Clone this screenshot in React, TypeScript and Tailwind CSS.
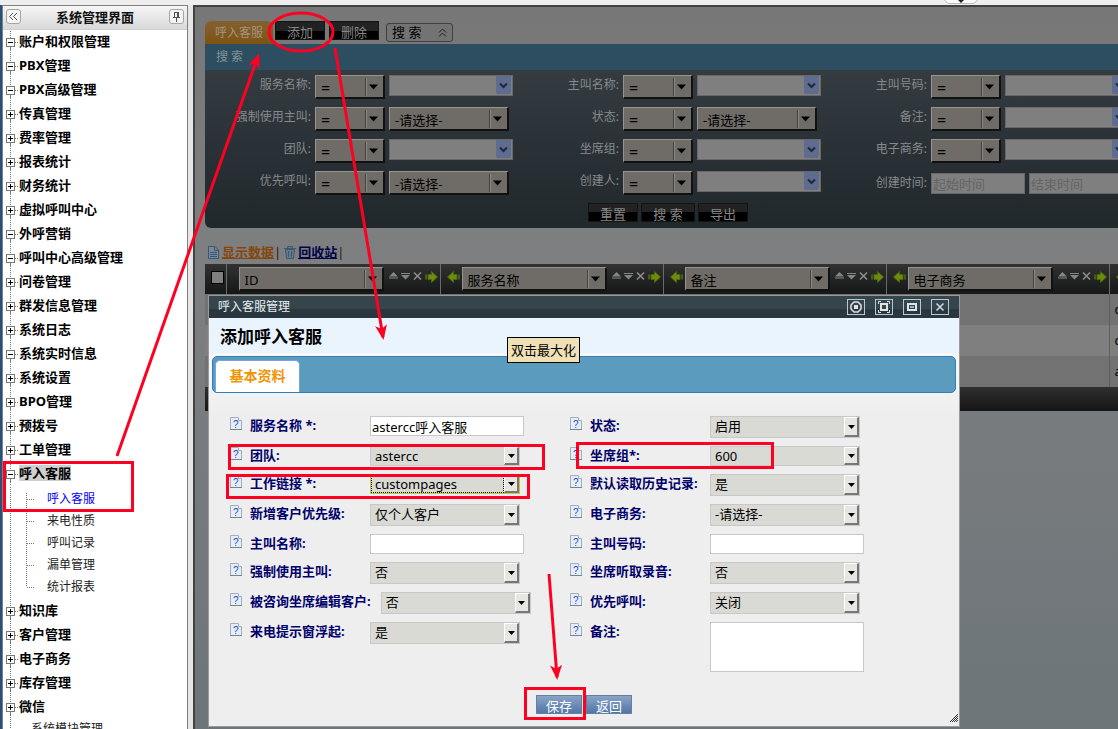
import { useState } from "react";
import type { ReactNode } from "react";
import clsx from "clsx";

interface TreeItem {
  label: string;
  open?: boolean;
  active?: boolean;
  children?: string[];
}

const TREE: TreeItem[] = [
  { label: "账户和权限管理", open: true },
  { label: "PBX管理", open: true },
  { label: "PBX高级管理", open: true },
  { label: "传真管理" },
  { label: "费率管理" },
  { label: "报表统计" },
  { label: "财务统计" },
  { label: "虚拟呼叫中心" },
  { label: "外呼营销", open: true },
  { label: "呼叫中心高级管理", open: true },
  { label: "问卷管理" },
  { label: "群发信息管理" },
  { label: "系统日志" },
  { label: "系统实时信息", open: true },
  { label: "系统设置" },
  { label: "BPO管理" },
  { label: "预拨号" },
  { label: "工单管理" },
  {
    label: "呼入客服",
    open: true,
    active: true,
    children: ["呼入客服", "来电性质", "呼叫记录", "漏单管理", "统计报表"],
  },
  { label: "知识库" },
  { label: "客户管理" },
  { label: "电子商务" },
  { label: "库存管理" },
  { label: "微信" },
];

interface SearchItem {
  id: string;
  label: string;
  kind: "combo" | "select" | "range";
}

const SEARCH_FIELDS: SearchItem[] = [
  { id: "s-name", label: "服务名称:", kind: "combo" },
  { id: "s-caller-name", label: "主叫名称:", kind: "combo" },
  { id: "s-caller-no", label: "主叫号码:", kind: "combo" },
  { id: "s-force", label: "强制使用主叫:", kind: "select" },
  { id: "s-status", label: "状态:", kind: "select" },
  { id: "s-note", label: "备注:", kind: "combo" },
  { id: "s-team", label: "团队:", kind: "combo" },
  { id: "s-group", label: "坐席组:", kind: "combo" },
  { id: "s-shop", label: "电子商务:", kind: "combo" },
  { id: "s-priority", label: "优先呼叫:", kind: "select" },
  { id: "s-creator", label: "创建人:", kind: "combo" },
  { id: "s-created", label: "创建时间:", kind: "range" },
];

interface FormItem {
  id: string;
  label: string;
  kind: "text" | "select" | "textarea";
  value: string;
  short?: boolean;
  focused?: boolean;
}

const FORM_FIELDS: FormItem[] = [
  { id: "f-name", label: "服务名称 *:", kind: "text", value: "astercc呼入客服" },
  { id: "f-status", label: "状态:", kind: "select", value: "启用" },
  { id: "f-team", label: "团队:", kind: "select", value: "astercc", short: true },
  { id: "f-group", label: "坐席组*:", kind: "select", value: "600", short: true },
  { id: "f-link", label: "工作链接 *:", kind: "select", value: "custompages", short: true, focused: true },
  { id: "f-history", label: "默认读取历史记录:", kind: "select", value: "是" },
  { id: "f-new", label: "新增客户优先级:", kind: "select", value: "仅个人客户" },
  { id: "f-shop", label: "电子商务:", kind: "select", value: "-请选择-" },
  { id: "f-caller-name", label: "主叫名称:", kind: "text", value: "" },
  { id: "f-caller-no", label: "主叫号码:", kind: "text", value: "" },
  { id: "f-force", label: "强制使用主叫:", kind: "select", value: "否" },
  { id: "f-record", label: "坐席听取录音:", kind: "select", value: "否" },
  { id: "f-edit", label: "被咨询坐席编辑客户:", kind: "select", value: "否" },
  { id: "f-priority", label: "优先呼叫:", kind: "select", value: "关闭" },
  { id: "f-popup", label: "来电提示窗浮起:", kind: "select", value: "是" },
  { id: "f-note", label: "备注:", kind: "textarea", value: "" },
];

const TABLE_COLUMNS = ["ID", "服务名称", "备注", "电子商务", "工作链接"];

/* ---------- sidebar ---------- */

function TreeRow({ item, first }: { item: TreeItem; first: boolean }) {
  return (
    <li>
      <button type="button" className="flex h-6 w-full items-start text-left">
        <svg width="16" height="24" className="shrink-0" stroke="#777" fill="none">
          <path d={first ? "M7.5 1V8" : "M7.5 0V8"} strokeDasharray="1 1" />
          <path d="M7.5 17V20" />
          <path d="M7.5 20V24" strokeDasharray="1 1" />
          <rect x="3.5" y="8.5" width="8" height="8" fill="#fff" />
          <path d="M5 12.5H10" stroke="#000" />
          {!item.open && <path d="M7.5 10V15" stroke="#000" />}
          <path d="M12 12.5H16" strokeDasharray="1 1" />
        </svg>
        <span
          className={clsx(
            "mt-[3px] text-[13px] leading-4 font-bold whitespace-nowrap text-black",
            item.active && "bg-[#cfcfcf]"
          )}
        >
          {item.label}
        </span>
      </button>
      {item.children && (
        <ul className="pt-0.5 pb-px">
          {item.children.map((child, i) => (
            <li key={child} className="flex h-[22px] items-center">
              <svg width="44" height="24" className="shrink-0" stroke="#777" fill="none">
                <path d="M7.5 0V24" strokeDasharray="1 1" />
                <path
                  d={i === 0 ? "M23.5 6V24" : i === item.children!.length - 1 ? "M23.5 0V12" : "M23.5 0V24"}
                  strokeDasharray="1 1"
                />
                <path d="M24 12.5H32" strokeDasharray="1 1" />
              </svg>
              <a href="#" className={clsx("text-xs leading-4", i === 0 ? "text-[#0000ff]" : "text-[#222]")}>
                {child}
              </a>
            </li>
          ))}
        </ul>
      )}
    </li>
  );
}

function HeaderButton({ title, children }: { title: string; children: ReactNode }) {
  return (
    <button
      type="button"
      title={title}
      className="flex size-[15px] items-center justify-center rounded-[3px] border border-[#a5a5a5] bg-[#f4f4f4]"
    >
      {children}
    </button>
  );
}

function Sidebar() {
  return (
    <aside className="flex w-[186px] shrink-0 flex-col border border-b-0 border-[#808080] bg-white">
      <div className="flex h-6 shrink-0 items-center justify-between border-b border-[#d0d0d0] bg-gradient-to-b from-[#f6f6f6] to-[#d9d9d9] px-[3px] pb-0.5">
        <HeaderButton title="收起">
          <svg width="11" height="11" fill="none" stroke="#555">
            <path d="M5 2L1.5 5.5L5 9M9 2L5.5 5.5L9 9" />
          </svg>
        </HeaderButton>
        <h1 className="text-[13px] leading-4 font-bold text-[#111]">系统管理界面</h1>
        <HeaderButton title="固定">
          <svg width="11" height="11" fill="none" stroke="#555">
            <path d="M3.5 1V6.5M7.5 1V6.5M3 1.5H8M2 6.5H9M5.5 7V11" />
            <path d="M6.5 2V6" />
          </svg>
        </HeaderButton>
      </div>
      <ul className="min-h-0 flex-1 overflow-hidden">
        {TREE.map((item, i) => (
          <TreeRow key={item.label} item={item} first={i === 0} />
        ))}
        <li className="flex h-[22px] items-start">
          <svg width="28" height="22" stroke="#777" className="shrink-0">
            <path d="M7.5 0V22" strokeDasharray="1 1" />
          </svg>
          <a href="#" className="pt-0.5 text-xs leading-4 text-[#222]">
            系统模块管理
          </a>
        </li>
      </ul>
    </aside>
  );
}

/* ---------- dimmed page ---------- */

function OldSelect({ id, label, value, className }: { id?: string; label?: string; value: string; className: string }) {
  return (
    <div className={clsx("relative h-6 shrink-0", className)}>
      <select
        id={id}
        aria-label={label}
        className={clsx(
          "block h-full w-full appearance-none rounded-none border-t border-r-2 border-b-2 border-l border-t-[#96948f] border-r-[#111] border-b-[#111] border-l-[#96948f] bg-[#6f6c67] pt-0.5 pl-[5px] leading-5 font-normal text-black",
          value === "=" ? "text-base" : "text-[13px]"
        )}
      >
        <option>{value}</option>
      </select>
      <svg width="20" height="24" className="pointer-events-none absolute top-0 right-0" fill="none">
        <path d="M0.5 3V21" stroke="#44423f" />
        <path d="M1.5 3V21" stroke="#8b8984" />
        <path d="M4 9.5H13L8.5 14.5Z" fill="#000" />
      </svg>
    </div>
  );
}

function ComboInput({ id }: { id: string }) {
  return (
    <div className="flex h-[21px] w-[124px] shrink-0 border border-[#686868] bg-[#7f7f7f] pr-px">
      <input id={id} className="min-w-0 flex-1 bg-transparent px-1 text-[13px] outline-none" />
      <button type="button" title="展开" className="flex h-[18px] w-[15px] items-center justify-center rounded-b-xs bg-[#5e6c90]">
        <svg width="9" height="7" fill="none" stroke="#20283c" strokeWidth="2">
          <path d="M1 1.5L4.5 5L8 1.5" />
        </svg>
      </button>
    </div>
  );
}

function SearchField({ field }: { field: SearchItem }) {
  if (field.kind === "range") {
    return (
      <div className="flex h-6 items-start gap-1 pt-0.5">
        <label htmlFor={field.id} className="w-[106px] shrink-0 text-right text-xs leading-5">
          {field.label}
        </label>
        <input
          id={field.id}
          placeholder="起始时间"
          className="h-[21px] w-[94px] shrink-0 border border-[#686868] bg-[#7f7f7f] px-px text-[13px] placeholder:text-[#656565]"
        />
        <input
          aria-label="结束时间"
          placeholder="结束时间"
          className="h-[21px] w-[94px] shrink-0 border border-[#686868] bg-[#7f7f7f] px-px text-[13px] placeholder:text-[#656565]"
        />
      </div>
    );
  }
  return (
    <div className="flex h-6 items-start gap-1">
      <label htmlFor={field.id} className="w-[106px] shrink-0 text-right text-xs leading-5">
        {field.label}
      </label>
      <OldSelect label={`${field.label} 条件`} value="=" className="w-[70px]" />
      {field.kind === "combo" ? (
        <ComboInput id={field.id} />
      ) : (
        <OldSelect id={field.id} value="-请选择-" className="w-[120px]" />
      )}
    </div>
  );
}

function BlackButton({ className, children }: { className: string; children: ReactNode }) {
  return (
    <button
      type="button"
      className={clsx(
        "h-[19px] border border-[#141414] bg-gradient-to-b from-[#222] from-50% to-black to-50% pt-0.5 text-[13px] leading-4 whitespace-pre text-[#868686]",
        className
      )}
    >
      {children}
    </button>
  );
}

function SearchPanel() {
  return (
    <section>
      <div className="flex items-start">
        <button
          type="button"
          className="h-[23px] w-[68px] rounded-t-md bg-gradient-to-b from-[#84602f] to-[#7f520f] text-xs text-[#a09684]"
        >
          呼入客服
        </button>
        <BlackButton className="ml-0.5 w-[50px]">添加</BlackButton>
        <BlackButton className="ml-1 w-[50px]">删除</BlackButton>
        <button
          type="button"
          className="mt-0.5 ml-[7px] flex h-[19px] w-[67px] items-center justify-between rounded-[3px] border border-[#3f3f3f] bg-[#737373] px-[5px] text-[13px] whitespace-pre text-black"
        >
          搜 索
          <svg width="9" height="10" fill="none" stroke="#222">
            <path d="M1 4.5L4.5 1L8 4.5M1 8.5L4.5 5L8 8.5" />
          </svg>
        </button>
      </div>
      <h2 className="h-[26px] bg-[#2d4e60] pl-[11px] text-xs leading-[26px] whitespace-pre text-[#85929a]">搜 索</h2>
      <div className="overflow-hidden rounded-bl-md bg-gradient-to-b from-[#343b41] to-[#21282c] pt-[5px] pb-1.5 text-[#858a8d]">
        <div className="min-w-[926px]">
          <div className="grid grid-cols-[308px_308px_1fr] gap-y-2">
            {SEARCH_FIELDS.map((field) => (
              <SearchField key={field.id} field={field} />
            ))}
          </div>
          <div className="mt-2 flex justify-center gap-[3px]">
            <BlackButton className="w-[50px]">重置</BlackButton>
            <BlackButton className="w-[54px]">搜 索</BlackButton>
            <BlackButton className="w-[50px]">导出</BlackButton>
          </div>
        </div>
      </div>
    </section>
  );
}

function GreenArrow({ flip }: { flip?: boolean }) {
  return (
    <svg width="13" height="12" className={clsx("shrink-0", flip && "rotate-180")} fill="#6b8c0c">
      <path d="M3 3.5H6.5V0.5L12.5 6L6.5 11.5V8.5H3Z" stroke="#4c660a" />
      <path d="M1 3.5V8.5" stroke="#6b8c0c" />
    </svg>
  );
}

function DataTable() {
  return (
    <table className="w-full min-w-[1127px] table-fixed border-collapse">
      <colgroup>
        <col className="w-[21px]" />
        <col className="w-[214px]" />
        <col className="w-[223px]" />
        <col className="w-[223px]" />
        <col className="w-[223px]" />
        <col />
      </colgroup>
      <thead>
        <tr className="h-[30px] bg-gradient-to-b from-[#323232] to-[#161717]">
          <th className="border-r border-[#6a6a6a] p-0">
            <input
              type="checkbox"
              aria-label="全选"
              className="mb-1 ml-1.5 block size-[13px] appearance-none border border-black bg-[#7f7f7f]"
            />
          </th>
          {TABLE_COLUMNS.map((name, i) => (
            <th key={name} className="border-r border-[#6a6a6a] p-0">
              <div className={clsx("flex items-start font-normal", i === 0 ? "pl-3" : "pl-[6px]")}>
                {i > 0 && (
                  <span className="mt-1 mr-[2px]">
                    <GreenArrow flip />
                  </span>
                )}
                <OldSelect label={name} value={name} className="w-[145px]" />
                <svg width="34" height="12" className="mt-1 ml-1 shrink-0" fill="#858585">
                  <path d="M1 5.5L5.5 1L10 5.5ZM1 6.5H10V7.5H1ZM13 2H22V3H13ZM13 4H22L17.5 8.5Z" />
                  <path d="M26 1.5L33 8.5M33 1.5L26 8.5" stroke="#8f8f8f" strokeWidth="1.5" />
                </svg>
                <span className="mt-1 ml-[3px]">
                  <GreenArrow />
                </span>
              </div>
            </th>
          ))}
        </tr>
      </thead>
      <tbody className="text-[13px] text-black">
        {["custompages", "custompages", "astercc"].map((link, i) => (
          <tr key={i} className={clsx("h-[31px]", i % 2 ? "bg-[#7f7f7f]" : "bg-[#727272]")}>
            <td className="p-0" />
            <td className="p-0" />
            <td className="p-0" />
            <td className="p-0" />
            <td className="border-r border-[#5f5f5f] p-0" />
            <td className="py-0 pr-0 pl-[5px]">{link}</td>
          </tr>
        ))}
      </tbody>
      <tfoot>
        <tr className="h-6 bg-gradient-to-b from-[#303030] to-[#151515]">
          <td colSpan={6} className="p-0" />
        </tr>
      </tfoot>
    </table>
  );
}

function DimmedPage() {
  return (
    <main className="min-w-0 flex-1 overflow-hidden border-t-2 border-l-2 border-[#424242] bg-gradient-to-b from-[#777777] via-[#7e7f80] via-35% to-[#6d7579] pt-3.5 pl-2.5">
      <SearchPanel />
      <nav className="mt-4 mb-1 flex h-4 items-center text-[13px] leading-4">
        <svg width="17" height="16" fill="none" stroke="#36587a" className="shrink-0">
          <path d="M3.5 2.5H10L13.5 6V14.5H3.5ZM9.5 3V6.5H13" fill="#7b8894" />
          <path d="M5 8.5H12M5 10.5H12M5 12.5H12" />
        </svg>
        <a href="#" className="font-bold text-[#84460a] underline">
          显示数据
        </a>
        <span className="text-[#3c1010]">|</span>
        <svg width="14" height="16" fill="#62788c" stroke="#41596e" className="ml-0.5 shrink-0">
          <path d="M2.5 5.5H11.5L10.5 14.5H3.5ZM1 4.5H13M4.5 4V2.5H9.5V4M5.5 7V13M8.5 7V13" />
        </svg>
        <a href="#" className="ml-px font-bold text-[#03034a] underline">
          回收站
        </a>
        <span className="text-[#3c1010]">|</span>
      </nav>
      <DataTable />
    </main>
  );
}

/* ---------- dialog ---------- */

function HelpIcon() {
  return (
    <svg width="20" height="15" className="shrink-0">
      <path d="M0.5 1.5H8L11.5 5V13.5H0.5Z" fill="#e6eef5" stroke="#9fb0bd" />
      <path d="M8.5 1.5V4.5H11.5" fill="#fff" stroke="#9fb0bd" />
      <path d="M0 13.5H12" stroke="#73858f" />
      <text x="3" y="11.5" fontSize="10" fill="#2b48d8" fontFamily="Liberation Sans, sans-serif">
        ?
      </text>
    </svg>
  );
}

function FormControl({ field }: { field: FormItem }) {
  const [value, setValue] = useState(field.value);

  if (field.kind === "textarea") {
    return (
      <textarea
        id={field.id}
        value={value}
        onChange={(e) => setValue(e.target.value)}
        className="block h-[50px] w-[154px] resize-none border border-[#c8c8c8] bg-white px-px text-[13px]"
      />
    );
  }
  if (field.kind === "text") {
    return (
      <input
        id={field.id}
        type="text"
        value={value}
        onChange={(e) => setValue(e.target.value)}
        className="h-5 w-[154px] border border-[#c8c8c8] bg-white px-px text-[13px] text-black"
      />
    );
  }
  return (
    <div className={clsx("relative w-[150px] shrink-0", field.short ? "h-5" : "h-[22px]")}>
      <select
        id={field.id}
        value={value}
        onChange={(e) => setValue(e.target.value)}
        className={clsx(
          "block h-full w-full appearance-none rounded-none border bg-[#dadad5] pl-1 text-[13px] text-black",
          field.focused ? "border-[#c8c832]" : "border-[#c8c8c8]"
        )}
      >
        <option>{field.value}</option>
      </select>
      {field.focused && (
        <span className="pointer-events-none absolute inset-y-px right-4 left-px border border-dotted border-black" />
      )}
      <span className="pointer-events-none absolute inset-y-px right-px flex w-[15px] items-center justify-center border-t border-r-2 border-b-2 border-l border-t-white border-r-[#777] border-b-[#777] border-l-white bg-[#e6e6e2]">
        <svg width="7" height="4" fill="#000">
          <path d="M0 0H7L3.5 4Z" />
        </svg>
      </span>
    </div>
  );
}

function WindowButton({ title, children }: { title: string; children: ReactNode }) {
  return (
    <button type="button" title={title} className="flex h-4 w-[18px] items-center justify-center border border-[#b4c8d8]">
      <svg width="14" height="14" fill="none" stroke="#e2e2e2" className="shrink-0">
        {children}
      </svg>
    </button>
  );
}

function Dialog() {
  return (
    <section
      role="dialog"
      aria-label="呼入客服管理"
      className="absolute top-[295px] left-[208px] w-[752px] border border-[#999] bg-[#eeeeee]"
    >
      <header className="flex h-[22px] items-center justify-between bg-gradient-to-b from-[#36444b] from-60% to-[#2b373e] to-60% pr-2.5 pl-[9px]">
        <span className="text-xs leading-4 text-[#e8eef2]">呼入客服管理</span>
        <div className="flex gap-2.5">
          <WindowButton title="选项">
            <path d="M5 2H9L12 5V9L9 12H5L2 9V5Z" strokeWidth="1.5" />
            <rect x="5" y="5" width="4" height="4" fill="#e2e2e2" stroke="none" />
          </WindowButton>
          <WindowButton title="最大化">
            <path d="M1.5 4V1.5H4M10 1.5H12.5V4M12.5 10V12.5H10M4 12.5H1.5V10" />
            <rect x="4" y="4" width="6" height="6" strokeWidth="2" />
          </WindowButton>
          <WindowButton title="还原">
            <rect x="3" y="4" width="8" height="6" strokeWidth="2" />
            <path d="M5 7H9" stroke="#7fb6dc" strokeWidth="2" />
          </WindowButton>
          <WindowButton title="关闭">
            <path d="M3.5 3.5L10.5 10.5M10.5 3.5L3.5 10.5" stroke="#c8dcec" strokeWidth="1.5" />
          </WindowButton>
        </div>
      </header>
      <h2 className="h-[35px] bg-[#e9f4ff] pl-[11px] text-[17px] leading-[38px] font-bold text-black">添加呼入客服</h2>
      <div className="bg-gradient-to-b from-[#f8f8f8] to-[#eeeeee] px-[3px] pt-[3px] pb-[23px]">
        <div className="flex h-[37px] items-end rounded-[5px] border border-[#2d7fc0] bg-[#5b9bbd] pl-[2px]">
          <button
            type="button"
            className="h-8 w-[85px] rounded-t-[5px] border-x border-t border-[#7aa5dc] bg-white pb-0.5 text-sm leading-7 font-bold text-[#ee9405]"
          >
            基本资料
          </button>
        </div>
      </div>
      <form onSubmit={(e) => e.preventDefault()}>
        <div className="grid grid-cols-[340px_1fr] gap-y-2 pl-[21px]">
          {FORM_FIELDS.map((field) => (
            <div key={field.id} className="flex items-start">
              <HelpIcon />
              <label
                htmlFor={field.id}
                className="min-w-[120px] shrink-0 pr-2.5 text-[13px] leading-[18px] font-bold text-[#00006a]"
              >
                {field.label}
              </label>
              <FormControl field={field} />
            </div>
          ))}
        </div>
        <div className="flex justify-center gap-1 pt-[23px]">
          <button
            type="submit"
            className="h-[19px] w-[46px] border border-[#68809c] bg-gradient-to-b from-[#8aa3c6] to-[#4f77a8] text-[13px] leading-5 text-white"
          >
            保存
          </button>
          <button
            type="button"
            className="h-[19px] w-[46px] border border-[#68809c] bg-gradient-to-b from-[#8aa3c6] to-[#4f77a8] text-[13px] leading-5 text-white"
          >
            返回
          </button>
        </div>
        <div className="flex h-3 items-end justify-end pr-px pb-1">
          <svg width="8" height="8" stroke="#333">
            <path d="M0 8L8 0M2 8L8 2M4 8L8 4M6 8L8 6" />
          </svg>
        </div>
      </form>
      <div
        role="tooltip"
        className="absolute top-[41px] left-[298px] border border-black bg-[#efe0b5] px-[3px] text-[13px] leading-6 whitespace-nowrap text-black"
      >
        双击最大化
      </div>
    </section>
  );
}

/* red guide marks drawn over the whole screen */
function GuideMarks() {
  return (
    <svg className="pointer-events-none absolute inset-0 h-full w-full" fill="none" stroke="#ff0022" strokeWidth="3">
      <defs>
        <marker id="tip" markerUnits="userSpaceOnUse" markerWidth="16" markerHeight="12" refX="12" refY="6" orient="auto">
          <path d="M0 0L15 6L0 12L4 6Z" fill="#ff0022" stroke="none" />
        </marker>
      </defs>
      <rect x="4.5" y="462.5" width="128" height="48" />
      <ellipse cx="301" cy="32" rx="32" ry="19" />
      <path d="M117 456L258 56" markerEnd="url(#tip)" />
      <path d="M335 48L383 337" markerEnd="url(#tip)" />
      <rect x="229.5" y="445.5" width="314" height="23" />
      <rect x="227.5" y="475.5" width="301" height="22" />
      <rect x="577.5" y="443.5" width="195" height="24" />
      <path d="M549 574L557 677" markerEnd="url(#tip)" />
      <rect x="525.5" y="688.5" width="59" height="30" />
    </svg>
  );
}

export default function App() {
  return (
    <div className="relative flex h-screen w-full flex-col overflow-hidden bg-[#e6e6e6] font-['Noto_Sans','Noto_Sans_CJK_SC',sans-serif]">
      <div className="flex h-[5px] shrink-0 justify-end bg-[#eeeeee] pr-[140px]">
        <svg width="34" height="5" fill="none">
          <path d="M0.5 0L4 3.5H30L33.5 0" fill="#fafafa" stroke="#b8b8b8" />
          <path d="M14 0H20L17 3Z" fill="#222" />
        </svg>
      </div>
      <div className="flex min-h-0 flex-1 gap-[5px] border-l-2 border-[#27517b]">
        <Sidebar />
        <DimmedPage />
      </div>
      <Dialog />
      <GuideMarks />
    </div>
  );
}
